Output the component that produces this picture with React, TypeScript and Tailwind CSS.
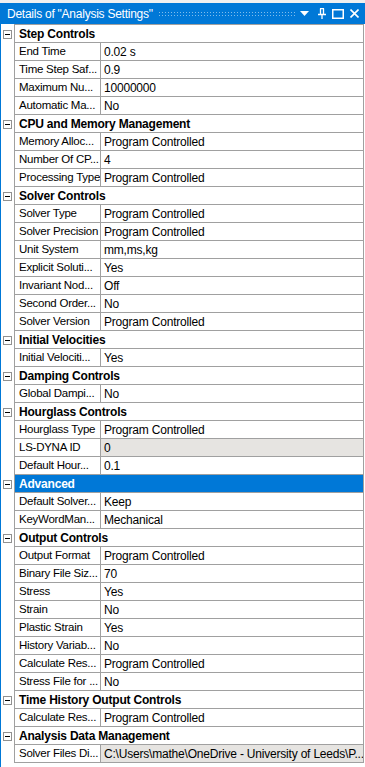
import React from 'react'

type Row = {label: string, value?: string, header?: boolean, selected?: boolean, readOnly?: boolean}

const rows: Row[] = [
    {label: 'Step Controls', header: true},
    {label: 'End Time', value: '0.02 s'},
    {label: 'Time Step Saf...', value: '0.9'},
    {label: 'Maximum Nu...', value: '10000000'},
    {label: 'Automatic Ma...', value: 'No'},
    {label: 'CPU and Memory Management', header: true},
    {label: 'Memory Alloc...', value: 'Program Controlled'},
    {label: 'Number Of CP...', value: '4'},
    {label: 'Processing Type', value: 'Program Controlled'},
    {label: 'Solver Controls', header: true},
    {label: 'Solver Type', value: 'Program Controlled'},
    {label: 'Solver Precision', value: 'Program Controlled'},
    {label: 'Unit System', value: 'mm,ms,kg'},
    {label: 'Explicit Soluti...', value: 'Yes'},
    {label: 'Invariant Nod...', value: 'Off'},
    {label: 'Second Order...', value: 'No'},
    {label: 'Solver Version', value: 'Program Controlled'},
    {label: 'Initial Velocities', header: true},
    {label: 'Initial Velociti...', value: 'Yes'},
    {label: 'Damping Controls', header: true},
    {label: 'Global Dampi...', value: 'No'},
    {label: 'Hourglass Controls', header: true},
    {label: 'Hourglass Type', value: 'Program Controlled'},
    {label: 'LS-DYNA ID', value: '0', readOnly: true},
    {label: 'Default Hour...', value: '0.1'},
    {label: 'Advanced', header: true, selected: true},
    {label: 'Default Solver...', value: 'Keep'},
    {label: 'KeyWordMan...', value: 'Mechanical'},
    {label: 'Output Controls', header: true},
    {label: 'Output Format', value: 'Program Controlled'},
    {label: 'Binary File Siz...', value: '70'},
    {label: 'Stress', value: 'Yes'},
    {label: 'Strain', value: 'No'},
    {label: 'Plastic Strain', value: 'Yes'},
    {label: 'History Variab...', value: 'No'},
    {label: 'Calculate Res...', value: 'Program Controlled'},
    {label: 'Stress File for ...', value: 'No'},
    {label: 'Time History Output Controls', header: true},
    {label: 'Calculate Res...', value: 'Program Controlled'},
    {label: 'Analysis Data Management', header: true},
    {label: 'Solver Files Di...', value: 'C:\\Users\\mathe\\OneDrive - University of Leeds\\P...', readOnly: true},
]

function Expander() {
    return (
        <div className="w-[9px] h-[9px] border border-[#919191] bg-white flex items-center justify-center">
            <div className="w-[5px] h-px bg-black"/>
        </div>
    )
}

function TitleIcons() {
    return (
        <div className="flex items-center">
            <svg width="9" height="5" viewBox="0 0 9 5" className="ml-[3px]">
                <path d="M0 0H9L4.5 5Z" fill="white"/>
            </svg>
            <svg width="8" height="11" viewBox="0 0 8 11" className="ml-[9px]">
                <path d="M2 0.5H6M2.5 0.5V6.5M5.5 0.5V6.5M0 6.5H8M4 6.5V11" stroke="white" strokeWidth="1.3" fill="none"/>
            </svg>
            <svg width="12" height="10" viewBox="0 0 12 10" className="ml-[6px]">
                <rect x="0.75" y="0.75" width="10.5" height="8.5" stroke="white" strokeWidth="1.5" fill="none"/>
            </svg>
            <svg width="9" height="9" viewBox="0 0 9 9" className="ml-[6px]">
                <path d="M0.5 0.5L8.5 8.5M8.5 0.5L0.5 8.5" stroke="white" strokeWidth="1.6"/>
            </svg>
        </div>
    )
}

export default function App() {
    return (
        <div className="w-[365px] h-[767px] bg-[#f0f0f0] pt-[3px] overflow-hidden"
             style={{fontFamily: '"Liberation Sans", Arial, sans-serif'}}>
            <div className="h-[21px] bg-[#0078d7] flex items-center pl-[7px] pr-[6px]">
                <span className="text-white text-[12px] tracking-[-0.25px] leading-none whitespace-nowrap">Details of "Analysis Settings"</span>
                <div
                    className="flex-1 ml-[5px] h-[5px] bg-[radial-gradient(circle,_#7fbcec_0.6px,_transparent_0.9px)] bg-[length:3px_3px]"/>
                <TitleIcons/>
            </div>
            <div className="h-[743px] bg-white border-l border-[#0078d7] flex">
                <div className="w-[13px] flex flex-col pt-px">
                    {rows.map((r, i) => (
                        <div key={i} className="h-[18px] flex items-center justify-start pl-[2px]">
                            {r.header && <Expander/>}
                        </div>
                    ))}
                </div>
                <div className="w-[350px] self-start border-l border-r border-t border-[#a0a0a0] text-[12px] tracking-[-0.2px] text-black">
                    {rows.map((r, i) => r.header ? (
                        <div key={i} className={`h-[18px] border-b border-[#a0a0a0] flex items-center ${r.selected ? 'bg-[#0078d7] text-white' : 'bg-white'}`}>
                            <span className="pl-[4px] font-bold whitespace-nowrap">{r.label}</span>
                        </div>
                    ) : (
                        <div key={i} className="h-[18px] border-b border-[#a0a0a0] flex">
                            <div className="w-[86px] border-r border-[#a0a0a0] flex items-center pl-[4px] text-[11.5px] tracking-[-0.25px] whitespace-nowrap overflow-hidden">
                                {r.label}
                            </div>
                            <div className={`flex-1 flex items-center pl-[3px] whitespace-nowrap overflow-hidden ${r.readOnly ? 'bg-[#e6e4e1]' : ''}`}>
                                {r.value}
                            </div>
                        </div>
                    ))}
                </div>
            </div>
        </div>
    )
}
